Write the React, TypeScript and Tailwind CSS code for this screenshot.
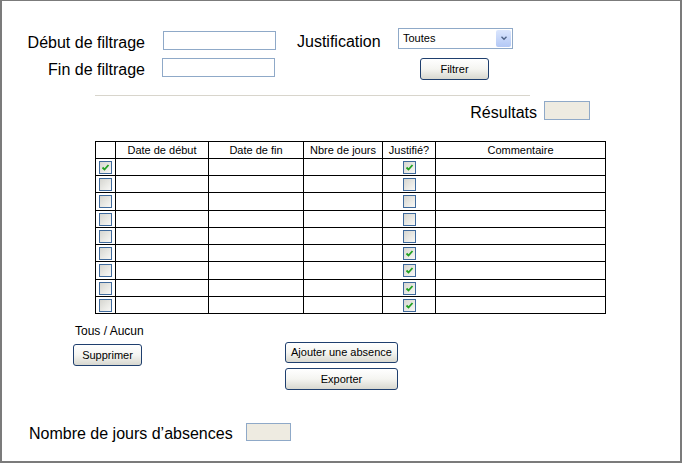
import React from "react";

const sans = { fontFamily: '"Liberation Sans", Arial, sans-serif' };

function Check() {
  return (
    <svg viewBox="0 0 9 9" className="h-[9px] w-[9px]">
      <path d="M1.5 4.5 L3.5 6.5 L7.5 2" fill="none" stroke="#21a121" strokeWidth="1.8" />
    </svg>
  );
}

function CheckBox({ checked }: { checked: boolean }) {
  return (
    <div className="mx-auto flex h-[13px] w-[13px] items-center justify-center border border-[#3f6a9c] bg-linear-to-br from-[#d6d6d0] to-[#f8f8f6]">
      {checked && <Check />}
    </div>
  );
}

function XpButton({ label, className }: { label: string; className: string }) {
  return (
    <button
      className={`flex items-center justify-center rounded-[3px] border border-[#1f3f6e] bg-linear-to-b from-white via-[#f5f5f1] to-[#d8d8d0] text-[11px] text-black ${className}`}
    >
      {label}
    </button>
  );
}

const rows: [boolean, boolean][] = [
  [true, true],
  [false, false],
  [false, false],
  [false, false],
  [false, false],
  [false, true],
  [false, true],
  [false, true],
  [false, true],
];

const cols = ["", "Date de début", "Date de fin", "Nbre de jours", "Justifié?", "Commentaire"];
const widths = ["w-[20px]", "w-[93px]", "w-[95px]", "w-[79px]", "w-[53px]", "w-[170px]"];

export default function App() {
  return (
    <div style={sans} className="h-[463px] w-[682px] border-2 border-t border-[#7b7b7b] bg-white text-black">
      {/* filter row 1 */}
      <div className="mt-[27px] flex h-[21px] items-start">
        <div className="mt-[6px] w-[143px] text-right text-[16px] leading-[18px]">Début de filtrage</div>
        <div className="ml-[18px] mt-[3px] h-[19px] w-[113px] border border-[#8fa9c8]" />
        <div className="ml-[21px] mt-[5px] w-[101px] text-[16px] leading-[18px]">Justification</div>
        <div className="flex h-[21px] w-[115px] items-center border border-[#8fa9c8] bg-white pl-[4px]">
          <span className="flex-1 text-[11px]">Toutes</span>
          <div className="mr-[1px] flex h-[17px] w-[15px] items-center justify-center rounded-[2px] bg-linear-to-b from-[#dbe6fd] to-[#b3c8f5]">
            <svg viewBox="0 0 8 6" className="h-[5px] w-[8px]">
              <path d="M1 1 L4 4 L7 1" fill="none" stroke="#4d6185" strokeWidth="1.6" />
            </svg>
          </div>
        </div>
      </div>

      {/* filter row 2 */}
      <div className="mt-[9px] flex h-[22px] items-start">
        <div className="mt-[3px] w-[143px] text-right text-[16px] leading-[18px]">Fin de filtrage</div>
        <div className="ml-[17px] h-[19px] w-[113px] border border-[#8fa9c8]" />
        <XpButton label="Filtrer" className="ml-[145px] h-[22px] w-[69px]" />
      </div>

      <div className="ml-[93px] mt-[15px] h-px w-[435px] bg-[#d8d5cc]" />

      {/* results */}
      <div className="mt-[5px] flex items-start justify-end gap-[7px] pr-[90px]">
        <span className="mt-[3px] text-[16px] leading-[18px]">Résultats</span>
        <div className="h-[19px] w-[46px] border border-[#8fa9c8] bg-[#eeebe1]" />
      </div>

      {/* table */}
      <table className="ml-[93px] mt-[19px] border-collapse text-[11px]">
        <thead>
          <tr className="h-[17px]">
            {cols.map((c, i) => (
              <th key={i} className={`${widths[i]} border border-black p-0 text-center font-normal leading-[15px]`}>
                {c}
              </th>
            ))}
          </tr>
        </thead>
        <tbody>
          {rows.map(([a, b], r) => (
            <tr key={r} className={r === 2 || r === 6 ? "h-[18px]" : "h-[17px]"}>
              <td className="border border-black p-0">
                <CheckBox checked={a} />
              </td>
              <td className="border border-black p-0" />
              <td className="border border-black p-0" />
              <td className="border border-black p-0" />
              <td className="border border-black p-0">
                <CheckBox checked={b} />
              </td>
              <td className="border border-black p-0" />
            </tr>
          ))}
        </tbody>
      </table>

      <div className="ml-[73px] mt-[10px] text-[12px] leading-[14px]">Tous / Aucun</div>

      <div className="mt-[4px] flex items-start">
        <XpButton label="Supprimer" className="ml-[71px] mt-[2px] h-[22px] w-[69px]" />
        <div className="ml-[143px] flex flex-col gap-[5px]">
          <XpButton label="Ajouter une absence" className="h-[21px] w-[113px]" />
          <XpButton label="Exporter" className="h-[22px] w-[113px]" />
        </div>
      </div>

      {/* bottom */}
      <div className="ml-[27px] mt-[33px] flex items-start gap-[13px]">
        <span className="mt-[2px] text-[16px] leading-[18px]">Nombre de jours d’absences</span>
        <div className="h-[18px] w-[45px] border border-[#8fa9c8] bg-[#eeebe1]" />
      </div>
    </div>
  );
}
